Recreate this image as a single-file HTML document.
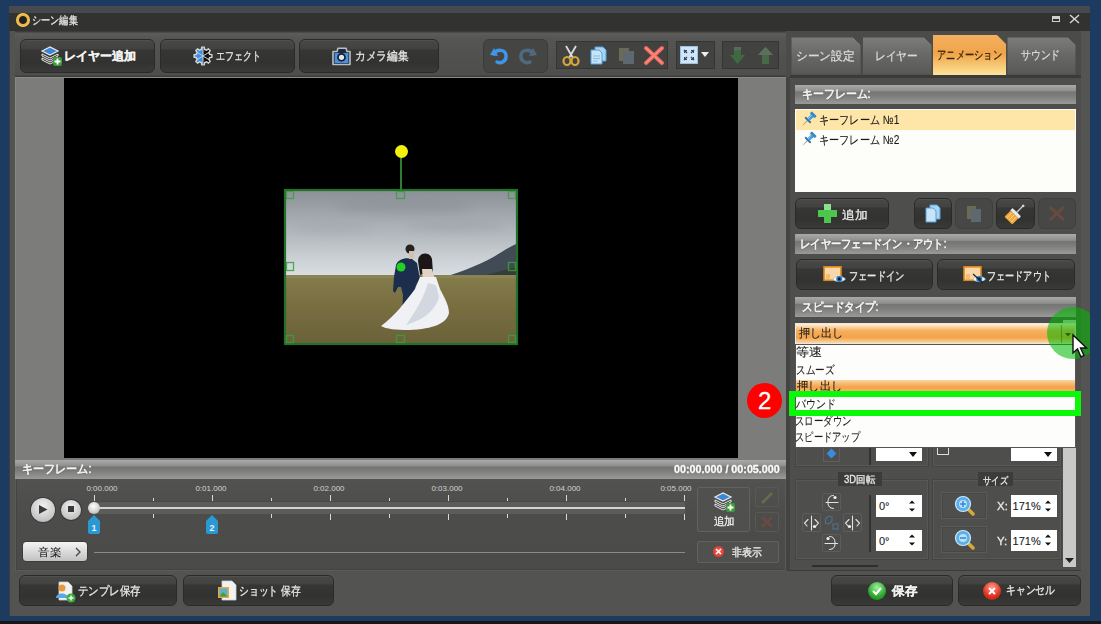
<!DOCTYPE html>
<html><head><meta charset="utf-8">
<style>
*{box-sizing:border-box;margin:0;padding:0}
html,body{width:1101px;height:624px;overflow:hidden;background:#1d3b61;font-family:"Liberation Sans",sans-serif;}
.a{position:absolute}
.btn{position:absolute;border-radius:6px;background:linear-gradient(#484947 0%,#424341 27%,#363735 31%,#323331 70%,#3a3b39 100%);border:1px solid #2a2b29;box-shadow:inset 0 1px 0 #50514f;color:#ececec;font-size:12px;}
.grp{position:absolute;border-radius:6px;background:#454644;border:1px solid #3b3c3a;}
.grp2{position:absolute;background:#424341;border:1px solid #353634;}
.hdr{position:absolute;background:linear-gradient(#aaaba9 0%,#8e8f8d 32%,#757674 36%,#7e7f7d 60%,#9a9b99 100%);color:#f6f6f6;font-size:12px;font-weight:bold;}
.t{position:absolute;white-space:nowrap;line-height:1;-webkit-text-stroke:0.3px currentColor;}
svg{position:absolute;overflow:visible}
</style></head><body>
<!-- bottom dark strip -->
<div class="a" style="left:0;top:621px;width:1101px;height:3px;background:#161616"></div>
<!-- window -->
<div class="a" style="left:9px;top:6px;width:1081px;height:610px;background:#535452;border-left:1px solid #3c3d3c"></div>
<div class="a" style="left:9px;top:6px;width:1081px;height:7px;background:#464a4f"></div>
<div class="a" style="left:9px;top:13px;width:1081px;height:18px;background:#323331"></div>
<!-- title icon -->
<div class="a" style="left:16px;top:13px;width:14px;height:14px;border-radius:50%;background:radial-gradient(#222 35%,#e8b040 45%,#f6cf5a 70%,#9a6a10 90%)"></div>
<div id="title" class="t" style="left:32.3px;top:14.6px;font-size:11px;font-weight:400;color:#e2e2e2;transform:scaleX(0.830);transform-origin:0 0">シーン編集</div>
<!-- min / close -->
<div class="a" style="left:1052px;top:16px;width:8px;height:6px;border:1.5px solid #cfcfcf;border-top-width:3px"></div>
<svg style="left:1069px;top:14px" width="11" height="10"><path d="M1 1 L10 9 M10 1 L1 9" stroke="#d8d8d8" stroke-width="1.4"/></svg>

<!-- toolbar area -->
<div class="a" style="left:15px;top:31px;width:771px;height:46px;background:linear-gradient(#3c3d3b 0,#3c3d3b 1px,#5c5d5b 2px,#555654 8px,#50514f 30px,#4e4f4d 44px,#3e3f3d 45px)"></div>

<div class="btn" style="left:20px;top:39px;width:135px;height:34px"></div>
<div id="b_layer" class="t" style="left:63.7px;top:49.5px;font-size:12px;font-weight:700;color:#f2f2f2">レイヤー追加</div>
<svg style="left:41px;top:46px" width="22" height="20" viewBox="0 0 22 20">
 <path d="M1 12 L9 16 L17 12 L17 14 L9 18 L1 14Z" fill="#2c2c2c" stroke="#e8e8e8" stroke-width="1"/>
 <path d="M1 8 L9 12 L17 8 L17 10 L9 14 L1 10Z" fill="#2c2c2c" stroke="#e8e8e8" stroke-width="1"/>
 <path d="M1 5 L9 1 L17 5 L9 9Z" fill="#3a86d8" stroke="#e8e8e8" stroke-width="1.2"/>
 <rect x="12" y="11" width="9" height="9" rx="2" fill="#3c9a3c"/>
 <path d="M16.5 12.5 V18.5 M13.5 15.5 H19.5" stroke="#fff" stroke-width="1.8"/>
</svg>

<div class="btn" style="left:160px;top:39px;width:135px;height:34px"></div>
<svg style="left:193px;top:46px" width="20" height="20" viewBox="0 0 20 20">
 <defs><clipPath id="gl"><rect x="0" y="0" width="10" height="20"/></clipPath></defs>
 <path d="M8.31 3.41 L8.80 1.08 L11.20 1.08 L11.69 3.41 L13.46 4.15 L15.46 2.85 L17.15 4.54 L15.85 6.54 L16.59 8.31 L18.92 8.80 L18.92 11.20 L16.59 11.69 L15.85 13.46 L17.15 15.46 L15.46 17.15 L13.46 15.85 L11.69 16.59 L11.20 18.92 L8.80 18.92 L8.31 16.59 L6.54 15.85 L4.54 17.15 L2.85 15.46 L4.15 13.46 L3.41 11.69 L1.08 11.20 L1.08 8.80 L3.41 8.31 L4.15 6.54 L2.85 4.54 L4.54 2.85 L6.54 4.15Z" fill="#111"/>
 <path d="M8.31 3.41 L8.80 1.08 L11.20 1.08 L11.69 3.41 L13.46 4.15 L15.46 2.85 L17.15 4.54 L15.85 6.54 L16.59 8.31 L18.92 8.80 L18.92 11.20 L16.59 11.69 L15.85 13.46 L17.15 15.46 L15.46 17.15 L13.46 15.85 L11.69 16.59 L11.20 18.92 L8.80 18.92 L8.31 16.59 L6.54 15.85 L4.54 17.15 L2.85 15.46 L4.15 13.46 L3.41 11.69 L1.08 11.20 L1.08 8.80 L3.41 8.31 L4.15 6.54 L2.85 4.54 L4.54 2.85 L6.54 4.15Z" fill="#3a8ee6" clip-path="url(#gl)"/>
 <path d="M10 2 V18 M3.5 6 L16.5 14 M3.5 14 L16.5 6" stroke="#cfcfcf" stroke-width="1"/>
 <path d="M8.31 3.41 L8.80 1.08 L11.20 1.08 L11.69 3.41 L13.46 4.15 L15.46 2.85 L17.15 4.54 L15.85 6.54 L16.59 8.31 L18.92 8.80 L18.92 11.20 L16.59 11.69 L15.85 13.46 L17.15 15.46 L15.46 17.15 L13.46 15.85 L11.69 16.59 L11.20 18.92 L8.80 18.92 L8.31 16.59 L6.54 15.85 L4.54 17.15 L2.85 15.46 L4.15 13.46 L3.41 11.69 L1.08 11.20 L1.08 8.80 L3.41 8.31 L4.15 6.54 L2.85 4.54 L4.54 2.85 L6.54 4.15Z" fill="none" stroke="#d4d4d4" stroke-width="1.4"/>
</svg>
<div id="b_effect" class="t" style="left:216.1px;top:50.0px;font-size:12px;font-weight:400;color:#e6e6e6;transform:scaleX(0.745);transform-origin:0 0">エフェクト</div>

<div class="btn" style="left:299px;top:39px;width:140px;height:34px"></div>
<svg style="left:331px;top:47px" width="21" height="19" viewBox="0 0 21 19">
 <path d="M2 4.5 H6 L7 1.2 H15 L16 4.5 H19 V17.5 H2Z" fill="#1a2a40" stroke="#bdbdbd" stroke-width="1.6" stroke-linejoin="round"/>
 <rect x="3.6" y="6" width="13.8" height="10" fill="#4a90dc"/>
 <circle cx="10.5" cy="10.3" r="4.3" fill="#102030"/>
 <circle cx="10.5" cy="10.3" r="2.6" fill="#e6e6e6"/>
</svg>
<div id="b_camera" class="t" style="left:354.5px;top:49.7px;font-size:12px;font-weight:400;color:#e6e6e6;transform:scaleX(0.890);transform-origin:0 0">カメラ編集</div>

<!-- undo group -->
<div class="grp" style="left:483px;top:39px;width:65px;height:34px"></div>
<svg style="left:489px;top:45px" width="22" height="22" viewBox="0 0 22 22">
 <path d="M5 9 C7 4 16 4 17 10 C18 16 12 19 8 17" fill="none" stroke="#3d96e6" stroke-width="3.5" stroke-linecap="round"/>
 <path d="M1 10 L5 3 L9 11Z" fill="#3d96e6"/>
</svg>
<svg style="left:516px;top:45px" width="22" height="22" viewBox="0 0 22 22">
 <path d="M17 9 C15 4 6 4 5 10 C4 16 10 19 14 17" fill="none" stroke="#4d6a80" stroke-width="3.5" stroke-linecap="round"/>
 <path d="M21 10 L17 3 L13 11Z" fill="#4d6a80"/>
</svg>

<!-- edit group -->
<div class="grp2" style="left:556px;top:41px;width:112px;height:28px"></div>
<svg style="left:561px;top:45px" width="20" height="21" viewBox="0 0 20 21">
 <path d="M5 1 L12 13 M15 1 L8 13" stroke="#dcdcdc" stroke-width="1.8"/>
 <ellipse cx="6" cy="16" rx="3.5" ry="4" fill="none" stroke="#d9a63a" stroke-width="2.2"/>
 <ellipse cx="14" cy="16" rx="3.5" ry="4" fill="none" stroke="#d9a63a" stroke-width="2.2"/>
</svg>
<svg style="left:590px;top:46px" width="18" height="19" viewBox="0 0 18 19">
 <path d="M5 1 H13 L16 4 V15 H5Z" fill="#a8d4f4" stroke="#5aa0d8" stroke-width="1"/>
 <path d="M1 4 H9 L12 7 V18 H1Z" fill="#c6e4fa" stroke="#5aa0d8" stroke-width="1"/>
 <path d="M3 10 H10 M3 12.5 H10 M3 15 H8" stroke="#7ab0dc" stroke-width="0.8"/>
</svg>
<svg style="left:618px;top:46px" width="18" height="19" viewBox="0 0 18 19">
 <path d="M1 2 H11 V15 H1Z" fill="#6a6a55"/>
 <path d="M5 5 H16 V18 H5Z" fill="#5d6870"/>
</svg>
<svg style="left:644px;top:46px" width="20" height="19" viewBox="0 0 20 19">
 <path d="M2 2 L18 17 M18 2 L2 17" stroke="#f06a60" stroke-width="4" stroke-linecap="round"/>
 <path d="M2 2 L18 17 M18 2 L2 17" stroke="#ff8e80" stroke-width="1.5" stroke-linecap="round"/>
</svg>

<!-- fit group -->
<div class="grp2" style="left:676px;top:41px;width:39px;height:28px"></div>
<div class="a" style="left:680px;top:46px;width:18px;height:18px;background:#cfe6f8;border:1px solid #9cc0e0"></div>
<svg style="left:683px;top:49px" width="12" height="12" viewBox="0 0 12 12">
 <path d="M1 1 L4 4 M11 1 L8 4 M1 11 L4 8 M11 11 L8 8" stroke="#3a4a5a" stroke-width="1.5"/>
 <path d="M1 1 H4 V2 H2 V4 H1Z M11 1 H8 V2 H10 V4 H11Z M1 11 H4 V10 H2 V8 H1Z M11 11 H8 V10 H10 V8 H11Z" fill="#3a4a5a"/>
</svg>
<svg style="left:701px;top:52px" width="8" height="5"><path d="M0 0 H8 L4 5Z" fill="#eee"/></svg>

<!-- arrows group -->
<div class="grp2" style="left:722px;top:41px;width:57px;height:28px"></div>
<svg style="left:729px;top:46px" width="17" height="19" viewBox="0 0 17 19">
 <path d="M5 1 H12 V9 H16 L8.5 18 L1 9 H5Z" fill="#3f6a3f"/>
 <path d="M5 1 H12 V4 H5Z" fill="#5a6a5a"/>
</svg>
<svg style="left:757px;top:46px" width="17" height="19" viewBox="0 0 17 19">
 <path d="M8.5 1 L16 9 H12 V18 H5 V9 H1Z" fill="#466a46"/>
 <path d="M8.5 1 L16 9 H1Z" fill="#5f6f5f"/>
</svg>

<!-- preview -->
<div class="a" style="left:15px;top:77px;width:771px;height:383px;background:#7c7d7b;border-left:1px solid #878886"></div>
<div class="a" style="left:15px;top:76px;width:771px;height:1px;background:#3c3d3b"></div><div class="a" style="left:15px;top:77px;width:771px;height:1px;background:#8a8b89"></div><div class="a" style="left:64px;top:78px;width:674px;height:380px;background:#000"></div>

<!-- photo -->
<svg style="left:284px;top:189px" width="234" height="156" viewBox="0 0 234 156">
 <defs>
  <linearGradient id="sky" x1="0" y1="0" x2="0" y2="1">
   <stop offset="0" stop-color="#8a8f96"/>
   <stop offset="0.15" stop-color="#a0a5ab"/>
   <stop offset="0.3" stop-color="#b5babf"/>
   <stop offset="0.45" stop-color="#ccd1d5"/>
   <stop offset="0.56" stop-color="#dadee2"/>
   <stop offset="1" stop-color="#e4e8ea"/>
  </linearGradient>
  <linearGradient id="grass" x1="0" y1="0" x2="0" y2="1">
   <stop offset="0" stop-color="#857d4c"/>
   <stop offset="0.4" stop-color="#796f42"/>
   <stop offset="1" stop-color="#6a613a"/>
  </linearGradient>
  <filter id="bl" x="-5%" y="-5%" width="110%" height="110%"><feGaussianBlur stdDeviation="0.6"/></filter>
  <filter id="bl2" x="-50%" y="-50%" width="200%" height="200%"><feGaussianBlur stdDeviation="5"/></filter>
 </defs>
 <g filter="url(#bl)">
 <rect x="0" y="0" width="234" height="156" fill="url(#sky)"/>
 <g filter="url(#bl2)" opacity="0.15">
  <ellipse cx="120" cy="18" rx="70" ry="7" fill="#60656c"/>
  <ellipse cx="170" cy="38" rx="50" ry="5" fill="#70757c"/>
  <ellipse cx="50" cy="40" rx="40" ry="5" fill="#80858c"/>
 </g>
 <path d="M160 88 C180 82 200 74 216 64 C222 60 228 57 234 54 V89 H160Z" fill="#414b55"/>
 <path d="M195 88 C210 84 222 80 234 78 V89 H190Z" fill="#343d38"/>
 <rect x="0" y="86" width="234" height="70" fill="url(#grass)"/>
 <path d="M0 86 H234 V89 H0Z" fill="#8a8352"/>
 <!-- man -->
 <path d="M112 76 C114 70 122 68 128 70 L133 74 L136 90 L132 96 L128 112 L124 126 L118 126 L119 106 L117 98 L114 98 L111 104 L109 102 L110 88Z" fill="#1e2d4e"/>
 <circle cx="126" cy="60" r="4.5" fill="#222"/>
 <path d="M125 62 H130 V70 H125Z" fill="#d8c0b0"/>
 <!-- woman -->
 <path d="M134 72 C134 63 146 62 148 70 L149 84 L143 84 L136 86Z" fill="#1a1718"/>
 <path d="M138 80 L148 80 L151 90 L139 92Z" fill="#e2d2c4"/>
 <path d="M136 88 L152 88 L156 100 C160 108 165 116 165 124 C163 134 150 140 125 141 C112 141 102 140 97 137 C110 128 122 112 131 100Z" fill="#eff1f5"/>
 <path d="M144 94 L152 96 L155 108 C152 120 142 130 122 136 C132 122 140 108 144 94Z" fill="#d3d8e0"/>
 </g>
 <!-- frame -->
 <rect x="1" y="1" width="232" height="154" fill="none" stroke="#23702a" stroke-width="2.2"/>
 <g fill="none" stroke="#3aa03a" stroke-width="1.3" opacity="0.85">
  <rect x="2.5" y="2.5" width="7" height="7"/>
  <rect x="112.5" y="2.5" width="8" height="7"/>
  <rect x="224.5" y="2.5" width="7" height="7"/>
  <rect x="2.5" y="73.5" width="7" height="8"/>
  <rect x="224.5" y="73.5" width="7" height="8"/>
  <rect x="2.5" y="146.5" width="7" height="7"/>
  <rect x="112.5" y="146.5" width="8" height="7"/>
  <rect x="224.5" y="146.5" width="7" height="7"/>
 </g>
 <circle cx="117" cy="78" r="4.5" fill="#22d022"/>
</svg>
<div class="a" style="left:400px;top:157px;width:2px;height:33px;background:#2f7d2f"></div>
<div class="a" style="left:395px;top:145px;width:13px;height:13px;border-radius:50%;background:#f2f20e"></div>

<!-- timeline -->
<div class="hdr" style="left:15px;top:460px;width:771px;height:19px"></div>
<div id="tl_hdr" class="t" style="left:21.8px;top:462.6px;font-size:12px;font-weight:400;color:#f4f4f4;transform:scaleX(0.922);transform-origin:0 0;/*x*/-webkit-text-stroke:0.6px #f4f4f4;text-shadow:0 1px 1px rgba(0,0,0,0.3)">キーフレーム:</div>
<div id="tl_time" class="t" style="left:674.0px;top:464.2px;font-size:11px;font-weight:700;color:#fafafa;transform:scaleX(0.977);transform-origin:0 0">00:00.000 / 00:05.000</div>
<div class="a" style="left:15px;top:479px;width:771px;height:92px;background:linear-gradient(#525351,#4c4d4b 40%,#4a4b49);border:1px solid #5b5c5a;border-top:none;border-radius:0 0 2px 2px;box-shadow:inset 1px -1px 0 #444543"></div>
<!-- play/stop -->
<div class="a" style="left:31px;top:498px;width:24px;height:24px;border-radius:50%;background:radial-gradient(circle at 50% 35%,#f2f2f2,#c4c4c4 70%,#999);box-shadow:0 0 0 1px #3a3a3a"></div>
<svg style="left:38px;top:504px" width="12" height="12"><path d="M1 1 L9.5 5.5 L1 10Z" fill="#3a3a3a"/></svg>
<div class="a" style="left:61px;top:500px;width:20px;height:20px;border-radius:50%;background:radial-gradient(circle at 50% 35%,#f2f2f2,#c4c4c4 70%,#999);box-shadow:0 0 0 1px #3a3a3a"></div>
<div class="a" style="left:68px;top:506px;width:6px;height:6px;background:#3a3a3a"></div>
<!-- track -->
<div class="a" style="left:94px;top:501px;width:591px;height:13px;background:#5c5d5b;border-top:1px solid #4a4b49"></div>
<div class="a" style="left:94px;top:507px;width:591px;height:2px;background:#d4d4d2"></div>
<div class="a" style="left:88px;top:502px;width:12px;height:12px;border-radius:50%;background:radial-gradient(circle at 45% 35%,#ffffff,#cfcfcf 60%,#8f8f8f)"></div>
<svg style="left:0;top:0" width="1101" height="624">
 <g stroke="#d8d8d8" stroke-width="1">
  <path d="M94.5 495 V501 M212.5 495 V501 M330.5 495 V501 M448.5 495 V501 M566.5 495 V501 M684.5 495 V501"/>
  <path d="M153.5 498 V501 M271.5 498 V501 M389.5 498 V501 M507.5 498 V501 M625.5 498 V501"/>
  <path d="M153.5 514 V518 M271.5 514 V518 M389.5 514 V518 M507.5 514 V518 M625.5 514 V518"/>
  <path d="M330.5 514 V520 M448.5 514 V520 M566.5 514 V520 M684.5 514 V520"/>
  <path d="M94 552.5 H685" stroke="#8a8b89"/>
 </g>
 <g font-size="8" fill="#d2d2d2" font-family="Liberation Sans" text-anchor="middle">
  <text x="102" y="491">0:00.000</text>
  <text x="211" y="491">0:01.000</text>
  <text x="329" y="491">0:02.000</text>
  <text x="447" y="491">0:03.000</text>
  <text x="565" y="491">0:04.000</text>
  <text x="676" y="491">0:05.000</text>
 </g>
 <path d="M88 521 L94 515 L100 521 V532 Q100 534 98 534 H90 Q88 534 88 532Z" fill="#2a98d2"/>
 <path d="M206 521 L212 515 L218 521 V532 Q218 534 216 534 H208 Q206 534 206 532Z" fill="#2a98d2"/>
 <text x="94" y="531" font-size="9" font-weight="bold" fill="#e8f4ff" text-anchor="middle" font-family="Liberation Sans">1</text>
 <text x="212" y="531" font-size="9" font-weight="bold" fill="#e8f4ff" text-anchor="middle" font-family="Liberation Sans">2</text>
</svg>
<!-- music button -->
<div class="a" style="left:22px;top:541px;width:66px;height:21px;border-radius:4px;background:linear-gradient(#f4f4f4,#d6d6d6 60%,#c2c2c2);border:1px solid #3c3c3c"></div>
<div id="music" class="t" style="left:37.9px;top:546.8px;font-size:11px;font-weight:400;color:#222;transform:scaleX(1.053);transform-origin:0 0;/*x*/-webkit-text-stroke:0.1px currentColor">音楽</div>
<svg style="left:75px;top:547px" width="6" height="10"><path d="M1 1 L5 5 L1 9" fill="none" stroke="#444" stroke-width="1.3"/></svg>
<!-- add layer -->
<div class="a" style="left:697px;top:487px;width:53px;height:45px;border:1px solid #61625f;border-radius:2px;background:#50514f"></div>
<svg style="left:714px;top:492px" width="22" height="20" viewBox="0 0 22 20">
 <path d="M1 12 L9 16 L17 12 L17 14 L9 18 L1 14Z" fill="#2c2c2c" stroke="#e8e8e8" stroke-width="1"/>
 <path d="M1 8 L9 12 L17 8 L17 10 L9 14 L1 10Z" fill="#2c2c2c" stroke="#e8e8e8" stroke-width="1"/>
 <path d="M1 5 L9 1 L17 5 L9 9Z" fill="#3a86d8" stroke="#e8e8e8" stroke-width="1.2"/>
 <rect x="12" y="11" width="9" height="9" rx="2" fill="#3c9a3c"/>
 <path d="M16.5 12.5 V18.5 M13.5 15.5 H19.5" stroke="#fff" stroke-width="1.8"/>
</svg>
<div id="tl_add" class="t" style="left:713.6px;top:515.8px;font-size:11px;font-weight:400;color:#eeeeee;transform:scaleX(0.952);transform-origin:0 0">追加</div>
<div class="a" style="left:755px;top:487px;width:24px;height:20px;border:1px solid #585957;border-radius:2px"></div>
<svg style="left:760px;top:491px" width="14" height="14"><path d="M2 12 L12 2" stroke="#6d6a4a" stroke-width="2.5"/></svg>
<div class="a" style="left:755px;top:512px;width:24px;height:20px;border:1px solid #585957;border-radius:2px"></div>
<svg style="left:761px;top:516px" width="12" height="12"><path d="M1 1 L11 11 M11 1 L1 11" stroke="#6a4a42" stroke-width="2.5"/></svg>
<!-- hide button -->
<div class="a" style="left:697px;top:541px;width:82px;height:22px;border:1px solid #61625f;border-radius:2px;background:#50514f"></div>
<div class="a" style="left:713px;top:546px;width:11px;height:11px;border-radius:50%;background:radial-gradient(#ff6a5a,#c8281e)"></div>
<svg style="left:715px;top:548px" width="7" height="7"><path d="M1 1 L6 6 M6 1 L1 6" stroke="#fff" stroke-width="1.4"/></svg>
<div id="hide" class="t" style="left:731.5px;top:546.7px;font-size:11px;font-weight:400;color:#eeeeee;transform:scaleX(0.909);transform-origin:0 0">非表示</div>

<!-- right panel -->
<div class="a" style="left:786px;top:31px;width:304px;height:540px;background:#4b4c4a"></div>
<div class="a" style="left:786px;top:77px;width:4px;height:494px;background:#434442"></div>
<!-- tabs -->
<svg style="left:790px;top:35px" width="292" height="43" viewBox="0 0 292 43">
 <defs>
  <linearGradient id="tabg" x1="0" y1="0" x2="0" y2="1">
   <stop offset="0" stop-color="#7c7d7b"/><stop offset="0.5" stop-color="#676866"/><stop offset="1" stop-color="#585957"/>
  </linearGradient>
  <linearGradient id="taba" x1="0" y1="0" x2="0" y2="1">
   <stop offset="0" stop-color="#f3b060"/><stop offset="0.45" stop-color="#f1a448"/><stop offset="1" stop-color="#fde79c"/>
  </linearGradient>
 </defs>
 <path d="M1 2 H63 L71 10 V40 H1Z" fill="url(#tabg)" stroke="#4a4b49" stroke-width="1"/>
 <path d="M72.5 2 H134 L142 10 V40 H72.5Z" fill="url(#tabg)" stroke="#4a4b49" stroke-width="1"/>
 <path d="M217 2 H278 L286 10 V40 H217Z" fill="url(#tabg)" stroke="#4a4b49" stroke-width="1"/>
 <path d="M143 0 H207 L216 9 V41 H143Z" fill="url(#taba)"/>
 <rect x="0" y="40" width="291" height="3" fill="#3b3c3a"/>
</svg>
<div id="tab1" class="t" style="left:795.9px;top:49.8px;font-size:12px;font-weight:400;color:#d8d8d8;transform:scaleX(0.979);transform-origin:0 0">シーン設定</div>
<div id="tab2" class="t" style="left:875.1px;top:49.5px;font-size:12px;font-weight:400;color:#d8d8d8;transform:scaleX(0.889);transform-origin:0 0">レイヤー</div>
<div id="tab3" class="t" style="left:936.7px;top:49.0px;font-size:12px;font-weight:400;color:#3a2810;transform:scaleX(0.771);transform-origin:0 0">アニメーション</div>
<div id="tab4" class="t" style="left:1021.0px;top:49.0px;font-size:12px;font-weight:400;color:#d8d8d8;transform:scaleX(0.818);transform-origin:0 0">サウンド</div>

<div class="a" style="left:790px;top:78px;width:291px;height:493px;background:#4e4f4d;border-bottom:1px solid #3c3d3b"></div>
<div class="a" style="left:1081px;top:31px;width:9px;height:540px;background:#545553"></div>

<!-- keyframe header -->
<div class="hdr" style="left:795px;top:85px;width:281px;height:19px"></div>
<div id="kf_hdr" class="t" style="left:801.7px;top:87.5px;font-size:12px;font-weight:400;color:#f4f4f4;transform:scaleX(0.911);transform-origin:0 0;/*x*/-webkit-text-stroke:0.6px #f4f4f4;text-shadow:0 1px 1px rgba(0,0,0,0.3)">キーフレーム:</div>
<div class="a" style="left:795px;top:109px;width:281px;height:83px;background:#fdfdf9"></div>
<div class="a" style="left:796px;top:110px;width:279px;height:20px;background:#fde6a8"></div>
<svg style="left:801px;top:111px" width="16" height="16" viewBox="0 0 16 16"><g transform="rotate(45 8 8)"><path d="M7.4 10 H8.6 L8.2 17 H7.8Z" fill="#a8987a"/><rect x="4" y="8.5" width="8" height="2" rx="0.8" fill="#2f78b8"/><path d="M6 3 H10 L9.5 8.6 H6.5Z" fill="#4a9ad8"/><rect x="4.5" y="0.5" width="7" height="3" rx="1" fill="#3a88c8"/><path d="M6.8 3.5 L7.4 8.4" stroke="#9ad0f4" stroke-width="0.9"/></g></svg>
<div id="kf1" class="t" style="left:819.2px;top:113.6px;font-size:12px;font-weight:400;color:#1a1a1a;transform:scaleX(0.847);transform-origin:0 0;/*x*/-webkit-text-stroke:0.1px currentColor">キーフレーム №1</div>
<svg style="left:801px;top:131px" width="16" height="16" viewBox="0 0 16 16"><g transform="rotate(45 8 8)"><path d="M7.4 10 H8.6 L8.2 17 H7.8Z" fill="#a8987a"/><rect x="4" y="8.5" width="8" height="2" rx="0.8" fill="#2f78b8"/><path d="M6 3 H10 L9.5 8.6 H6.5Z" fill="#4a9ad8"/><rect x="4.5" y="0.5" width="7" height="3" rx="1" fill="#3a88c8"/><path d="M6.8 3.5 L7.4 8.4" stroke="#9ad0f4" stroke-width="0.9"/></g></svg>
<div id="kf2" class="t" style="left:819.2px;top:133.8px;font-size:12px;font-weight:400;color:#1a1a1a;transform:scaleX(0.847);transform-origin:0 0;/*x*/-webkit-text-stroke:0.1px currentColor">キーフレーム №2</div>

<!-- kf buttons -->
<div class="btn" style="left:795px;top:198px;width:94px;height:31px"></div>
<svg style="left:818px;top:204px" width="19" height="19" viewBox="0 0 19 19"><path d="M6 0 H13 V6 H19 V13 H13 V19 H6 V13 H0 V6 H6Z" fill="#4cc64c"/><path d="M6 0 H13 V6 H6Z" fill="#8ee08e"/></svg>
<div id="kf_add" class="t" style="left:841.6px;top:208.9px;font-size:12px;font-weight:400;color:#e8e8e8;transform:scaleX(1.070);transform-origin:0 0">追加</div>
<div class="btn" style="left:914px;top:198px;width:38px;height:31px"></div>
<svg style="left:925px;top:204px" width="16" height="19" viewBox="0 0 16 19"><path d="M5 1 H12 L15 4 V15 H5Z" fill="#a8d4f4" stroke="#5aa0d8" stroke-width="1"/><path d="M1 4 H8 L11 7 V18 H1Z" fill="#c6e4fa" stroke="#5aa0d8" stroke-width="1"/></svg>
<div class="btn" style="left:955px;top:198px;width:38px;height:31px;background:#474846;border-color:#3f403e;box-shadow:none"></div>
<svg style="left:966px;top:204px" width="16" height="19" viewBox="0 0 16 19"><path d="M1 2 H10 V15 H1Z" fill="#6a6a55"/><path d="M5 5 H15 V18 H5Z" fill="#5d6870"/></svg>
<div class="btn" style="left:996px;top:198px;width:39px;height:31px"></div>
<svg style="left:1003px;top:205px" width="22" height="20" viewBox="0 0 22 20"><g transform="rotate(45 11 10)"><path d="M11 -3 V6" stroke="#c8c8c8" stroke-width="1.4"/><circle cx="11" cy="-3" r="1.3" fill="#d8d8d8"/><rect x="5" y="6" width="12" height="3.5" rx="1" fill="#e8e8e8"/><rect x="5.5" y="9.5" width="11" height="8.5" rx="1" fill="#f2a83a"/><path d="M8 10 V17 M11 10 V17 M14 10 V17" stroke="#ffd890" stroke-width="0.9"/></g></svg>
<div class="btn" style="left:1038px;top:198px;width:38px;height:31px;background:#474846;border-color:#3f403e;box-shadow:none"></div>
<svg style="left:1048px;top:205px" width="18" height="17"><path d="M2 2 L16 15 M16 2 L2 15" stroke="#6a4a40" stroke-width="3"/></svg>

<!-- fade header -->
<div class="hdr" style="left:795px;top:234px;width:281px;height:20px"></div>
<div id="fade_hdr" class="t" style="left:799.8px;top:237.5px;font-size:12px;font-weight:400;color:#f4f4f4;transform:scaleX(0.855);transform-origin:0 0;/*x*/-webkit-text-stroke:0.6px #f4f4f4;text-shadow:0 1px 1px rgba(0,0,0,0.3)">レイヤーフェードイン・アウト:</div>
<div class="btn" style="left:796px;top:259px;width:137px;height:31px"></div>
<svg style="left:823px;top:266px" width="24" height="18" viewBox="0 0 24 18"><rect x="1" y="0.8" width="17" height="13.5" fill="#f8d7a8" stroke="#d8861a" stroke-width="1.6"/><rect x="3" y="8" width="4" height="5" fill="#f0b060" opacity="0.7"/><g transform="translate(9.5 9)"><path d="M0.5 4 C3 0.5 10 0.5 13 4 C10 7.5 3 7.5 0.5 4Z" fill="#f4f8fc" stroke="#9ac4e8" stroke-width="0.6"/><circle cx="6.75" cy="4" r="3" fill="#2a78c0"/><circle cx="6.75" cy="4" r="1.4" fill="#0a1a30"/></g></svg>
<div id="fadein" class="t" style="left:848.6px;top:269.9px;font-size:12px;font-weight:400;color:#e8e8e8;transform:scaleX(0.769);transform-origin:0 0">フェードイン</div>
<div class="btn" style="left:937px;top:259px;width:138px;height:31px"></div>
<svg style="left:963px;top:266px" width="24" height="18" viewBox="0 0 24 18"><rect x="1" y="0.8" width="17" height="13.5" fill="#f8d7a8" stroke="#d8861a" stroke-width="1.6"/><rect x="3" y="8" width="4" height="5" fill="#f0b060" opacity="0.7"/><g transform="translate(9.5 9)"><path d="M0.5 4 C3 0.5 10 0.5 13 4 C10 7.5 3 7.5 0.5 4Z" fill="#f4f8fc" stroke="#9ac4e8" stroke-width="0.6"/><circle cx="6.75" cy="4" r="3" fill="#2a78c0"/><circle cx="6.75" cy="4" r="1.4" fill="#0a1a30"/></g><path d="M10 8 L20 17" stroke="#222" stroke-width="1.2"/></svg>
<div id="fadeout" class="t" style="left:987.1px;top:269.9px;font-size:12px;font-weight:400;color:#e8e8e8;transform:scaleX(0.760);transform-origin:0 0">フェードアウト</div>

<!-- speed header -->
<div class="hdr" style="left:795px;top:297px;width:281px;height:20px"></div>
<div id="speed_hdr" class="t" style="left:801.5px;top:300.8px;font-size:12px;font-weight:400;color:#f4f4f4;transform:scaleX(0.876);transform-origin:0 0;/*x*/-webkit-text-stroke:0.6px #f4f4f4;text-shadow:0 1px 1px rgba(0,0,0,0.3)">スピードタイプ:</div>

<!-- hidden groups under dropdown -->
<div class="a" style="left:795px;top:420px;width:134px;height:47px;border:1px solid #444543;box-shadow:inset 0 0 0 1px #585957"></div>
<div class="a" style="left:932px;top:420px;width:130px;height:47px;border:1px solid #444543;box-shadow:inset 0 0 0 1px #585957"></div>
<div class="a" style="left:823px;top:445px;width:17px;height:17px;border:1px solid #5e5f5d"></div>
<div class="a" style="left:828px;top:450px;width:7px;height:7px;background:#3a8ae0;transform:rotate(45deg)"></div>
<div class="a" style="left:869px;top:440px;width:2px;height:25px;background:#333"></div>
<div class="a" style="left:876px;top:440px;width:46px;height:21px;background:#fff"></div>
<svg style="left:909px;top:452px" width="8" height="5"><path d="M0 0 H8 L4 5Z" fill="#111"/></svg>
<div class="a" style="left:937px;top:443px;width:12px;height:12px;border:1px solid #ddd"></div>
<div class="a" style="left:1011px;top:440px;width:46px;height:21px;background:#fff"></div>
<svg style="left:1044px;top:452px" width="8" height="5"><path d="M0 0 H8 L4 5Z" fill="#111"/></svg>

<!-- scrollbar -->
<div class="a" style="left:1063px;top:320px;width:13px;height:247px;background:#c9c9c7"></div>
<svg style="left:1065px;top:558px" width="9" height="5"><path d="M0 0 H9 L4.5 5Z" fill="#222"/></svg>

<!-- lower groups -->
<div class="a" style="left:795px;top:479px;width:134px;height:81px;border:1px solid #444543;box-shadow:inset 0 0 0 1px #585957"></div>
<div class="a" style="left:932px;top:479px;width:130px;height:81px;border:1px solid #444543;box-shadow:inset 0 0 0 1px #585957"></div>
<div class="a" style="left:838px;top:472px;width:44px;height:14px;background:#3c3d3b"></div>
<div id="rot3d" class="t" style="left:844.4px;top:475.4px;font-size:10px;font-weight:400;color:#e8e8e8;transform:scaleX(0.948);transform-origin:0 0">3D回転</div>
<div class="a" style="left:978px;top:472px;width:35px;height:14px;background:#3c3d3b"></div>
<div id="size" class="t" style="left:982.5px;top:475.5px;font-size:10px;font-weight:400;color:#e8e8e8;transform:scaleX(0.828);transform-origin:0 0">サイズ</div>
<!-- rotation icons -->
<div class="a" style="left:822px;top:493px;width:19px;height:18px;border:1px solid #5c5d5b;border-radius:2px"></div>
<div class="a" style="left:802px;top:513px;width:19px;height:19px;border:1px solid #5c5d5b;border-radius:2px"></div>
<div class="a" style="left:843px;top:513px;width:19px;height:19px;border:1px solid #5c5d5b;border-radius:2px"></div>
<div class="a" style="left:822px;top:534px;width:19px;height:18px;border:1px solid #5c5d5b;border-radius:2px"></div>
<svg style="left:0;top:0" width="1101" height="624">
 <g fill="none" stroke="#e2e2e2" stroke-width="1.1" stroke-linecap="round">
  <path d="M833.5 495.5 C826 495.5 826 508.5 833.5 508.5"/><path d="M826 502.5 H838"/>
  <path d="M829.5 536.5 C837 536.5 837 549.5 829.5 549.5"/><path d="M825 543.5 H837.5"/>
  <path d="M808 519.5 L804.5 523 L807 526 M815 519.5 L818.5 523 L815 527"/><path d="M811.5 516 V530"/>
  <path d="M856 519.5 L859.5 523 L857 526 M849 519.5 L845.5 523 L849 527"/><path d="M852.5 516 V530"/>
 </g>
 <g fill="#f0f0f0">
  <circle cx="835" cy="497.5" r="1.6"/><circle cx="828" cy="538.5" r="1.6"/>
  <circle cx="814.5" cy="526.5" r="1.6"/><circle cx="849.5" cy="526.5" r="1.6"/>
 </g>
 <g fill="none" stroke="#50708e" stroke-width="1.1">
  <path d="M825.5 519 L828.5 516 L832 517 L832 521 L829 524 L825.5 523Z"/>
  <rect x="833" y="524" width="5" height="5"/>
 </g>
</svg>
<div class="a" style="left:869px;top:495px;width:2px;height:57px;background:#333432"></div>
<div class="a" style="left:876px;top:495px;width:46px;height:22px;background:#fff"></div>
<div id="deg" class="t" style="left:878.9px;top:500.6px;font-size:11px;font-weight:400;color:#1a1a1a;/*x*/-webkit-text-stroke:0.1px currentColor">0°</div>
<svg style="left:908px;top:499px" width="8" height="14"><path d="M1 4.5 L4 1.5 L7 4.5Z M1 9.5 L4 12.5 L7 9.5Z" fill="#111"/></svg>
<div class="a" style="left:876px;top:530px;width:46px;height:21px;background:#fff"></div>
<div id="deg2" class="t" style="left:878.9px;top:535.5px;font-size:11px;font-weight:400;color:#1a1a1a;/*x*/-webkit-text-stroke:0.1px currentColor">0°</div>
<svg style="left:908px;top:533px" width="8" height="14"><path d="M1 4.5 L4 1.5 L7 4.5Z M1 9.5 L4 12.5 L7 9.5Z" fill="#111"/></svg>
<!-- zoom buttons -->
<div class="a" style="left:941px;top:492px;width:46px;height:27px;border:1px solid #5a5b59;box-shadow:inset 0 0 0 1px #474846"></div>
<div class="a" style="left:941px;top:526px;width:46px;height:27px;border:1px solid #5a5b59;box-shadow:inset 0 0 0 1px #474846"></div>
<svg style="left:954px;top:495px" width="22" height="22" viewBox="0 0 22 22"><path d="M13 13 L19 19" stroke="#d8a838" stroke-width="3.5" stroke-linecap="round"/><circle cx="9" cy="9" r="7.5" fill="#5ab0ea" stroke="#cfe8fa" stroke-width="1.2"/><circle cx="9" cy="9" r="4" fill="#fff" opacity="0.6"/><path d="M9 6 V12 M6 9 H12" stroke="#3a8ad8" stroke-width="1.6"/></svg>
<svg style="left:954px;top:529px" width="22" height="22" viewBox="0 0 22 22"><path d="M13 13 L19 19" stroke="#d8a838" stroke-width="3.5" stroke-linecap="round"/><circle cx="9" cy="9" r="7.5" fill="#5ab0ea" stroke="#cfe8fa" stroke-width="1.2"/><circle cx="9" cy="9" r="4" fill="#fff" opacity="0.6"/><path d="M6 9 H12" stroke="#3a8ad8" stroke-width="1.6"/></svg>
<div id="X" class="t" style="left:996.9px;top:500.9px;font-size:11px;font-weight:400;color:#e8e8e8;transform:scaleX(1.040);transform-origin:0 0">X:</div>
<div id="Y" class="t" style="left:996.9px;top:535.5px;font-size:11px;font-weight:400;color:#e8e8e8;transform:scaleX(1.040);transform-origin:0 0">Y:</div>
<div class="a" style="left:1011px;top:495px;width:46px;height:22px;background:#fff"></div>
<div id="pct" class="t" style="left:1012.6px;top:501.0px;font-size:11px;font-weight:400;color:#1a1a1a;/*x*/-webkit-text-stroke:0.1px currentColor">171%</div>
<svg style="left:1044px;top:499px" width="8" height="14"><path d="M1 4.5 L4 1.5 L7 4.5Z M1 9.5 L4 12.5 L7 9.5Z" fill="#111"/></svg>
<div class="a" style="left:1011px;top:530px;width:46px;height:21px;background:#fff"></div>
<div id="pct2" class="t" style="left:1012.6px;top:535.5px;font-size:11px;font-weight:400;color:#1a1a1a;/*x*/-webkit-text-stroke:0.1px currentColor">171%</div>
<svg style="left:1044px;top:533px" width="8" height="14"><path d="M1 4.5 L4 1.5 L7 4.5Z M1 9.5 L4 12.5 L7 9.5Z" fill="#111"/></svg>
<div class="a" style="left:812px;top:565px;width:66px;height:2px;background:#2e2f2d"></div>

<!-- combobox -->
<div class="a" style="left:795px;top:323px;width:281px;height:21px;background:linear-gradient(#fff1d8,#f6b060 35%,#f3a24a 70%,#fbd9a0);border:1px solid #e8e8e8"></div>
<div id="combo" class="t" style="left:798.6px;top:326.6px;font-size:12px;font-weight:400;color:#1a1a1a;transform:scaleX(0.928);transform-origin:0 0;/*x*/-webkit-text-stroke:0.1px currentColor">押し出し</div>
<!-- dropdown list -->
<div class="a" style="left:795px;top:344px;width:281px;height:104px;background:#fdfdfc;border:1px solid #555"></div>
<div class="a" style="left:796px;top:380px;width:279px;height:12px;background:linear-gradient(#fbd6a0,#f3a04a 60%,#f6b870)"></div>
<div id="l1" class="t" style="left:796.3px;top:345.9px;font-size:12px;font-weight:400;color:#1a1a1a;transform:scaleX(1.091);transform-origin:0 0;/*x*/-webkit-text-stroke:0.1px currentColor">等速</div>
<div id="l2" class="t" style="left:796.2px;top:363.9px;font-size:12px;font-weight:400;color:#1a1a1a;transform:scaleX(0.802);transform-origin:0 0;/*x*/-webkit-text-stroke:0.1px currentColor">スムーズ</div>
<div id="l3" class="t" style="left:796.5px;top:380.3px;font-size:12px;font-weight:400;color:#1a1a1a;transform:scaleX(0.939);transform-origin:0 0;/*x*/-webkit-text-stroke:0.1px currentColor">押し出し</div>
<div id="l4" class="t" style="left:796.2px;top:397.6px;font-size:12px;font-weight:400;color:#1a1a1a;transform:scaleX(0.826);transform-origin:0 0;/*x*/-webkit-text-stroke:0.1px currentColor">バウンド</div>
<div id="l5" class="t" style="left:795.2px;top:415.4px;font-size:12px;font-weight:400;color:#1a1a1a;transform:scaleX(0.786);transform-origin:0 0;/*x*/-webkit-text-stroke:0.1px currentColor">スローダウン</div>
<div id="l6" class="t" style="left:795.2px;top:431.1px;font-size:12px;font-weight:400;color:#1a1a1a;transform:scaleX(0.774);transform-origin:0 0;/*x*/-webkit-text-stroke:0.1px currentColor">スピードアップ</div>
<!-- green highlight rect -->
<div class="a" style="left:789px;top:391px;width:292px;height:25px;border:6px solid #08f808"></div>
<!-- red badge -->
<div class="a" style="left:747px;top:383px;width:35px;height:35px;border-radius:50%;background:#fe0000"></div>
<div id="badge" class="t" style="left:758px;top:389px;font-size:24px;font-weight:400;color:#fff">2</div>
<!-- cursor highlight -->
<div class="a" style="left:1047px;top:307px;width:43px;height:52px;overflow:hidden"><div class="a" style="left:0;top:0;width:52px;height:52px;border-radius:50%;background:rgba(0,186,0,0.56)"></div></div>
<div class="a" style="left:1061px;top:325px;width:1px;height:18px;background:rgba(0,80,0,0.35)"></div>
<svg style="left:1065px;top:333px" width="6" height="4"><path d="M0 0 H6 L3 3.5Z" fill="#1a6a1a"/></svg>
<svg style="left:1071.5px;top:334px" width="18" height="26" viewBox="0 0 18 26"><path d="M1 1 L1 19 L5.5 15 L9 23 L12 21.5 L8.5 14 L14.5 14Z" fill="#fff" stroke="#111" stroke-width="1.4"/></svg>

<!-- bottom buttons -->
<div class="btn" style="left:19px;top:575px;width:158px;height:31px"></div>
<svg style="left:55px;top:581px" width="22" height="22" viewBox="0 0 22 22"><path d="M4 1 H13 L17 5 V19 H4Z" fill="#f2f2f2" stroke="#cfcfcf" stroke-width="0.8"/><circle cx="7" cy="7" r="3.5" fill="#e89a3a"/><path d="M1 17 C1 11 13 11 13 17Z" fill="#5aa8e8"/><circle cx="16" cy="17" r="4.5" fill="#3aae3a"/><path d="M16 14.5 V19.5 M13.5 17 H18.5" stroke="#fff" stroke-width="1.5"/></svg>
<div id="tmpl" class="t" style="left:78.1px;top:585.2px;font-size:12px;font-weight:400;color:#e8e8e8;transform:scaleX(0.870);transform-origin:0 0">テンプレ保存</div>
<div class="btn" style="left:183px;top:575px;width:151px;height:31px"></div>
<svg style="left:217px;top:581px" width="21" height="20" viewBox="0 0 21 20"><path d="M5 0 H15 L19 4 V19 H5Z" fill="#f2f2f2" stroke="#d0d0d0" stroke-width="0.8"/><rect x="1" y="6" width="11" height="11" fill="#e8a838"/><rect x="2.5" y="7.5" width="8" height="8" fill="#5ab0d0"/><path d="M2.5 15.5 L6 11 L10.5 15.5Z" fill="#4a9a3a"/></svg>
<div id="shot" class="t" style="left:239.0px;top:584.5px;font-size:12px;font-weight:400;color:#e8e8e8;transform:scaleX(0.814);transform-origin:0 0">ショット 保存</div>
<div class="btn" style="left:831px;top:575px;width:122px;height:31px"></div>
<div class="a" style="left:868px;top:582px;width:18px;height:18px;border-radius:50%;background:radial-gradient(circle at 50% 30%,#9ef09e,#2aa82a 60%,#187a18)"></div>
<svg style="left:871px;top:585px" width="12" height="12"><path d="M2 6 L5 9 L10 3" fill="none" stroke="#fff" stroke-width="2"/></svg>
<div id="save" class="t" style="left:892.4px;top:584.5px;font-size:12px;font-weight:700;color:#f0f0f0;transform:scaleX(1.042);transform-origin:0 0">保存</div>
<div class="btn" style="left:958px;top:575px;width:123px;height:31px"></div>
<div class="a" style="left:983px;top:582px;width:18px;height:18px;border-radius:50%;background:radial-gradient(circle at 50% 30%,#ff9a8a,#e0301e 60%,#a81a10)"></div>
<svg style="left:987px;top:586px" width="10" height="10"><path d="M2 2 L8 8 M8 2 L2 8" stroke="#fff" stroke-width="2"/></svg>
<div id="cancel" class="t" style="left:1006.0px;top:584.0px;font-size:12px;font-weight:400;color:#e8e8e8;transform:scaleX(0.814);transform-origin:0 0">キャンセル</div>

</body></html>
